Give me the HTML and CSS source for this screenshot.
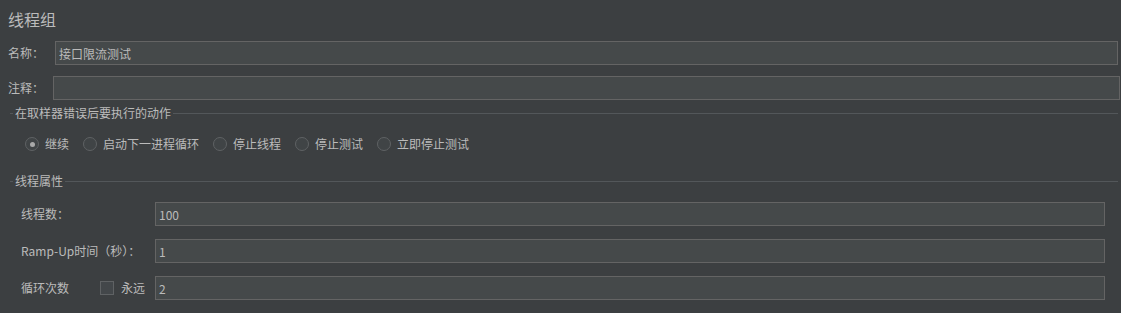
FILE: index.html
```html
<!DOCTYPE html>
<html lang="zh-CN">
<head>
<meta charset="utf-8">
<title>线程组</title>
<link rel="stylesheet" href="styles.css">
</head>
<body>
<div class="page">
  <div class="title">线程组</div>
  <div class="row row-name">
    <span class="lbl lbl-name">名称：</span>
    <input class="field" type="text" value="接口限流测试">
  </div>
  <div class="row row-comment">
    <span class="lbl lbl-comment">注释：</span>
    <input class="field" type="text" value="">
  </div>
  <div class="section-head sec1"><span>在取样器错误后要执行的动作</span></div>
  <div class="radios">
    <span class="radio checked"></span><span class="rtext">继续</span>
    <span class="radio"></span><span class="rtext">启动下一进程循环</span>
    <span class="radio"></span><span class="rtext">停止线程</span>
    <span class="radio"></span><span class="rtext">停止测试</span>
    <span class="radio"></span><span class="rtext">立即停止测试</span>
  </div>
  <div class="section-head sec2"><span>线程属性</span></div>
  <div class="prop first">
    <span class="plbl">线程数：</span>
    <input class="field" type="text" value="100">
  </div>
  <div class="prop">
    <span class="plbl">Ramp-Up时间（秒）：</span>
    <input class="field" type="text" value="1">
  </div>
  <div class="prop">
    <span class="plbl loop"><span class="looptext">循环次数</span><span class="check"></span><span class="forever">永远</span></span>
    <input class="field" type="text" value="2">
  </div>
</div>
</body>
</html>
```
FILE: styles.css
```css
html, body {
  margin: 0;
  padding: 0;
  background: #3c3f41;
}
body {
  width: 1121px;
  height: 313px;
  overflow: hidden;
  font-family: "Noto Sans CJK SC", "Noto Sans", sans-serif;
  font-size: 12px;
  color: #bbbbbb;
}
.page {
  display: flex;
  flex-direction: column;
}
.title {
  padding-top: 9px;
  padding-left: 8px;
  height: 20px;
  line-height: 20px;
  font-size: 16px;
  color: #bbbbbb;
}
.row {
  display: flex;
  align-items: center;
  height: 24px;
  padding-left: 8px;
}
.row-name {
  margin-top: 12px;
  padding-right: 3px;
}
.row-comment {
  margin-top: 11px;
  padding-right: 1px;
}
.lbl-name { width: 47px; }
.lbl-comment { width: 45px; }
.lbl { flex: none; line-height: 24px; }
.field {
  flex: 1;
  box-sizing: border-box;
  height: 24px;
  margin: 0;
  padding: 0 3px;
  background: #45494a;
  border: 1px solid #646464;
  border-radius: 0;
  color: #bbbbbb;
  font-family: "Noto Sans CJK SC", "Noto Sans", sans-serif;
  font-size: 12px;
  outline: none;
}
.section-head {
  display: flex;
  align-items: center;
  height: 14px;
  line-height: 14px;
  padding-left: 10px;
  padding-right: 3px;
}
.section-head::before {
  content: "";
  width: 3px;
  height: 1px;
  background: #53575a;
}
.section-head span {
  padding: 0 2px;
}
.section-head::after {
  content: "";
  flex: 1;
  height: 1px;
  background: #53575a;
}
.sec1 { margin-top: 6px; }
.sec2 { margin-top: 22px; }
.radios {
  display: flex;
  align-items: center;
  height: 16px;
  margin-top: 16px;
  padding-left: 25px;
}
.radio {
  flex: none;
  box-sizing: border-box;
  width: 14px;
  height: 14px;
  border-radius: 50%;
  border: 1px solid #5f6264;
  background: #404446;
  display: flex;
  align-items: center;
  justify-content: center;
}
.radio.checked::after {
  content: "";
  width: 5px;
  height: 5px;
  border-radius: 50%;
  background: #a9a9a9;
}
.rtext {
  margin-left: 6px;
  margin-right: 14px;
  line-height: 16px;
}
.prop {
  display: flex;
  align-items: center;
  height: 24px;
  margin-top: 13px;
  padding-left: 21px;
  padding-right: 16px;
}
.prop.first { margin-top: 14px; }
.plbl {
  flex: none;
  width: 134px;
  line-height: 24px;
}
.loop {
  display: flex;
  align-items: center;
}
.looptext { width: 79px; }
.check {
  box-sizing: border-box;
  width: 14px;
  height: 14px;
  border: 1px solid #5f6264;
  background: #43474a;
}
.forever { margin-left: 7px; }
```
